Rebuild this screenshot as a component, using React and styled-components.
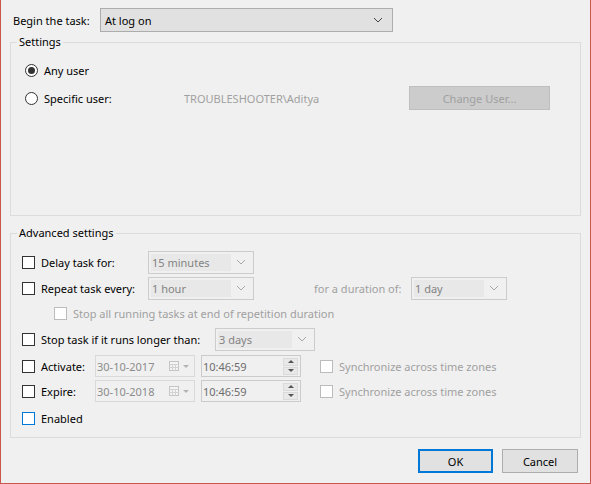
import React from "react";
import styled, { createGlobalStyle, css } from "styled-components";

const GlobalStyle = createGlobalStyle`
  html, body {
    margin: 0;
    padding: 0;
    background: #f0f0f0;
  }
  body {
    font-family: "Noto Sans", "Segoe UI", sans-serif;
    font-size: 11px;
    color: #000;
  }
`;

const Dialog = styled.div`
  box-sizing: border-box;
  width: 591px;
  height: 484px;
  background: #f0f0f0;
  border: 1px solid #c9574b;
  border-top: none;
  padding: 8px 9px 0 9px;
  display: flex;
  flex-direction: column;
`;

const TopRow = styled.div`
  display: flex;
  align-items: center;
  height: 24px;
  padding-left: 3px;
`;

const TopLabel = styled.span`
  width: 87px;
`;

const Select = styled.div`
  box-sizing: border-box;
  width: 293px;
  height: 24px;
  background: #e1e1e1;
  border: 1px solid #adadad;
  display: flex;
  align-items: center;
  justify-content: space-between;
  padding: 0 4px 0 4px;
`;

const Group = styled.div`
  position: relative;
  box-sizing: border-box;
  border: 1px solid #dcdcdc;
  margin-top: ${(p) => p.$top}px;
  height: ${(p) => p.$h}px;
  padding: ${(p) => p.$pad};
  display: flex;
  flex-direction: column;
`;

const Legend = styled.span`
  position: absolute;
  top: -9px;
  left: 6px;
  padding: 0 2px;
  background: #f0f0f0;
  line-height: 16px;
`;

const Row = styled.div`
  display: flex;
  align-items: center;
  height: ${(p) => p.$h || 24}px;
  margin-top: ${(p) => p.$gap || 0}px;
  padding-left: ${(p) => p.$indent || 0}px;
`;

const Option = styled.label`
  display: flex;
  align-items: center;
  width: ${(p) => (p.$w ? `${p.$w}px` : "auto")};
  flex-shrink: 0;
  color: ${(p) => (p.$disabled ? "#a0a0a0" : "#000")};
`;

const Radio = styled.span`
  box-sizing: border-box;
  width: 13px;
  height: 13px;
  border-radius: 50%;
  border: 1px solid #333;
  background: #fff;
  margin-right: 6px;
  display: flex;
  align-items: center;
  justify-content: center;
  &::after {
    content: "";
    width: 7px;
    height: 7px;
    border-radius: 50%;
    background: ${(p) => (p.$checked ? "#333" : "transparent")};
  }
`;

const Check = styled.span`
  box-sizing: border-box;
  width: 13px;
  height: 13px;
  border: 1px solid ${(p) => p.$color || "#333"};
  background: #fff;
  margin-right: 6px;
  flex-shrink: 0;
`;

const GreyText = styled.span`
  color: #a0a0a0;
  width: ${(p) => (p.$w ? `${p.$w}px` : "auto")};
  margin-left: ${(p) => p.$ml || 0}px;
  flex-shrink: 0;
`;

const DisabledButton = styled.div`
  box-sizing: border-box;
  width: 141px;
  height: 24px;
  background: #cccccc;
  border: 1px solid #bfbfbf;
  color: #a0a0a0;
  display: flex;
  align-items: center;
  justify-content: center;
`;

const Combo = styled.div`
  box-sizing: border-box;
  width: ${(p) => p.$w}px;
  height: 23px;
  border: 1px solid #cccccc;
  background: #f0f0f0;
  display: flex;
  align-items: center;
  padding: 2px;
  flex-shrink: 0;
`;

const ComboText = styled.span`
  flex: 1;
  align-self: stretch;
  display: flex;
  align-items: center;
  padding-left: 1px;
  background: #e8e8e8;
  color: #838383;
`;

const Chevron = styled.svg`
  width: 20px;
  height: 8px;
  flex-shrink: 0;
`;

const FieldBox = styled.div`
  box-sizing: border-box;
  width: 100px;
  height: 22px;
  border: 1px solid ${(p) => p.$border};
  background: #f0f0f0;
  display: flex;
  align-items: center;
  padding: 0 2px 0 1px;
  margin-right: ${(p) => p.$mr || 0}px;
  flex-shrink: 0;
  color: ${(p) => p.$color};
`;

const FieldValue = styled.span`
  flex: 1;
`;

const Spinner = styled.div`
  display: flex;
  flex-direction: column;
  gap: 1px;
`;

const SpinButton = styled.div`
  box-sizing: border-box;
  width: 15px;
  height: 8px;
  background: #e8e8e8;
  border: 1px solid #dadada;
  display: flex;
  align-items: center;
  justify-content: center;
  &::after {
    content: "";
    border-left: 3px solid transparent;
    border-right: 3px solid transparent;
    ${(p) =>
      p.$up
        ? css`border-bottom: 3px solid #555;`
        : css`border-top: 3px solid #555;`}
  }
`;

const ButtonRow = styled.div`
  display: flex;
  justify-content: flex-end;
  gap: 9px;
  margin-top: 11px;
  padding-right: 3px;
`;

const DialogButton = styled.div`
  box-sizing: border-box;
  width: ${(p) => p.$w}px;
  height: 24px;
  background: #e1e1e1;
  border: ${(p) => (p.$default ? "2px solid #0078d7" : "1px solid #adadad")};
  display: flex;
  align-items: center;
  justify-content: center;
`;

function ChevronIcon({ color = "#a8a8a8" }) {
  return (
    <Chevron viewBox="0 0 20 8">
      <path d="M6 2 L10 6 L14 2" fill="none" stroke={color} strokeWidth="1" />
    </Chevron>
  );
}

function ComboBox({ width, value }) {
  return (
    <Combo $w={width}>
      <ComboText>{value}</ComboText>
      <ChevronIcon />
    </Combo>
  );
}

function CalendarIcon() {
  return (
    <svg width="24" height="12" viewBox="0 0 24 12">
      <rect x="1.5" y="1.5" width="9" height="9" fill="#f4f4f4" stroke="#c4c4c4" />
      <path d="M1.5 4.5 H10.5 M1.5 7.5 H10.5 M4.5 4.5 V10.5 M7.5 4.5 V10.5" stroke="#d2d2d2" />
      <path d="M15 5 L21 5 L18 8 Z" fill="#b4b4b4" />
    </svg>
  );
}

function DatePicker({ value }) {
  return (
    <FieldBox $border="#d9d9d9" $color="#8c8c8c" $mr={6}>
      <FieldValue>{value}</FieldValue>
      <CalendarIcon />
    </FieldBox>
  );
}

function TimePicker({ value }) {
  return (
    <FieldBox $border="#cbcbcb" $color="#6d6d6d" $mr={19}>
      <FieldValue>{value}</FieldValue>
      <Spinner>
        <SpinButton $up />
        <SpinButton />
      </Spinner>
    </FieldBox>
  );
}

export default function App() {
  return (
    <>
      <GlobalStyle />
      <Dialog>
        <TopRow>
          <TopLabel>Begin the task:</TopLabel>
          <Select>
            <span>At log on</span>
            <ChevronIcon color="#444" />
          </Select>
        </TopRow>

        <Group $top={10} $h={174} $pad="15px 0 0 14px">
          <Legend>Settings</Legend>
          <Row>
            <Option>
              <Radio $checked />
              Any user
            </Option>
          </Row>
          <Row $gap={4}>
            <Option $w={159}>
              <Radio />
              Specific user:
            </Option>
            <GreyText $w={225}>TROUBLESHOOTER\Aditya</GreyText>
            <DisabledButton>Change User...</DisabledButton>
          </Row>
        </Group>

        <Group $top={17} $h={205} $pad="16px 0 0 11px">
          <Legend>Advanced settings</Legend>
          <Row>
            <Option $w={126}>
              <Check />
              Delay task for:
            </Option>
            <ComboBox width={106} value="15 minutes" />
          </Row>
          <Row $gap={2}>
            <Option $w={126}>
              <Check />
              Repeat task every:
            </Option>
            <ComboBox width={106} value="1 hour" />
            <GreyText $w={97} $ml={60}>
              for a duration of:
            </GreyText>
            <ComboBox width={96} value="1 day" />
          </Row>
          <Row $h={22} $gap={2} $indent={32}>
            <Option $disabled>
              <Check $color="#bcbcbc" />
              Stop all running tasks at end of repetition duration
            </Option>
          </Row>
          <Row $gap={3}>
            <Option $w={193}>
              <Check />
              Stop task if it runs longer than:
            </Option>
            <ComboBox width={100} value="3 days" />
          </Row>
          <Row $h={22} $gap={4}>
            <Option $w={73}>
              <Check />
              Activate:
            </Option>
            <DatePicker value="30-10-2017" />
            <TimePicker value="10:46:59" />
            <Option $disabled>
              <Check $color="#bcbcbc" />
              Synchronize across time zones
            </Option>
          </Row>
          <Row $h={22} $gap={3}>
            <Option $w={73}>
              <Check />
              Expire:
            </Option>
            <DatePicker value="30-10-2018" />
            <TimePicker value="10:46:59" />
            <Option $disabled>
              <Check $color="#bcbcbc" />
              Synchronize across time zones
            </Option>
          </Row>
          <Row $h={22} $gap={5}>
            <Option>
              <Check $color="#0078d7" />
              Enabled
            </Option>
          </Row>
        </Group>

        <ButtonRow>
          <DialogButton $w={75} $default>
            OK
          </DialogButton>
          <DialogButton $w={76}>Cancel</DialogButton>
        </ButtonRow>
      </Dialog>
    </>
  );
}
